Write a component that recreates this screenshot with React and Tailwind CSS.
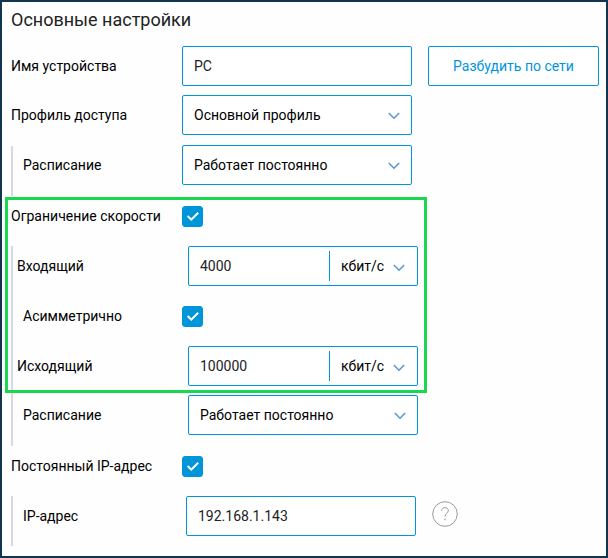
import { useState } from 'react';

function Chevron() {
  return (
    <svg
      className="pointer-events-none absolute right-[12px] top-[16px] h-[10px] w-[12px]"
      viewBox="0 0 12 10"
      fill="none"
      stroke="#5b98cf"
      strokeWidth="1.6"
      aria-hidden="true"
    >
      <path d="M0.8 2 L6 7.2 L11.2 2" />
    </svg>
  );
}

function Row({ label, id, nested, raised, indent = 'pl-0', children }) {
  return (
    <div className={nested ? 'flex h-[50px] border-l-2 border-[#d6d9e4]' : 'flex h-[50px]'}>
      <label
        htmlFor={id}
        className={`shrink-0 ${raised ? 'leading-[38px]' : 'leading-10'} ${nested ? 'w-[169px]' : 'w-[171px]'} ${indent}`}
      >
        {label}
      </label>
      {children}
    </div>
  );
}

function TextField({ id, value, className = '' }) {
  return (
    <input
      id={id}
      type="text"
      defaultValue={value}
      className={`h-10 w-[230px] shrink-0 rounded-xs border border-[#0095d9] bg-white px-[11px] text-[#222] outline-none ${className}`}
    />
  );
}

function SelectField({ id, options, className = '' }) {
  return (
    <div className={`relative -mt-px h-10 w-[230px] shrink-0 ${className}`}>
      <select
        id={id}
        className="h-10 w-full appearance-none rounded-xs border border-[#0095d9] bg-white px-[11px] outline-none"
      >
        {options.map((option) => (
          <option key={option}>{option}</option>
        ))}
      </select>
      <Chevron />
    </div>
  );
}

function SpeedField({ id, value }) {
  return (
    <div className="relative ml-[6px] flex h-10 w-[230px] shrink-0 items-center rounded-xs border border-[#0095d9] bg-white">
      <input
        id={id}
        type="text"
        defaultValue={value}
        className="h-full w-[140px] bg-transparent px-[11px] text-[#222] outline-none"
      />
      <span className="h-[30px] w-px bg-[#0095d9]" />
      <select
        aria-label="Единица скорости"
        className="h-full flex-1 appearance-none bg-transparent pl-[11px] outline-none"
      >
        <option>кбит/с</option>
        <option>Мбит/с</option>
      </select>
      <Chevron />
    </div>
  );
}

function Checkbox({ id }) {
  const [checked, setChecked] = useState(true);
  return (
    <div className="relative mt-[10px] size-[21px] shrink-0">
      <input
        id={id}
        type="checkbox"
        checked={checked}
        onChange={(e) => setChecked(e.target.checked)}
        className="block size-full appearance-none rounded-[3px] border border-[#0095d9] checked:bg-[#0095d9]"
      />
      {checked && (
        <svg
          className="pointer-events-none absolute inset-0 size-full"
          viewBox="0 0 21 21"
          fill="none"
          stroke="#fff"
          strokeWidth="2"
          aria-hidden="true"
        >
          <path d="M5.6 10 L9.3 13.6 L16.2 6.8" />
        </svg>
      )}
    </div>
  );
}

export default function App() {
  return (
    <main className="border-2 border-[#11344f] bg-[#fefefe] pb-[10px] pl-[9px] pr-[7px] font-['Roboto','Noto_Sans',sans-serif] text-sm text-black">
      <h1 className="mb-1 h-10 text-lg leading-9 text-[#222]">Основные настройки</h1>

      <Row label="Имя устройства" id="name">
        <TextField id="name" value="PC" />
        <button
          type="button"
          className="ml-4 h-10 flex-1 rounded-xs border border-[#0095d9] bg-white text-[#0095d9]"
        >
          Разбудить по сети
        </button>
      </Row>
      <Row label="Профиль доступа" id="profile" raised>
        <SelectField id="profile" options={['Основной профиль', 'Без доступа в Интернет']} />
      </Row>
      <Row label="Расписание" id="schedule" nested raised indent="pl-[10px]">
        <SelectField id="schedule" options={['Работает постоянно']} />
      </Row>

      <div className="relative">
        <Row label="Ограничение скорости" id="limit">
          <Checkbox id="limit" />
        </Row>
        <Row label="Входящий" id="incoming" nested indent="pl-1">
          <SpeedField id="incoming" value="4000" />
        </Row>
        <Row label="Асимметрично" id="asymmetric" nested indent="pl-[10px]">
          <Checkbox id="asymmetric" />
        </Row>
        <Row label="Исходящий" id="outgoing" nested indent="pl-1">
          <SpeedField id="outgoing" value="100000" />
        </Row>
        <div className="pointer-events-none absolute -left-[6px] bottom-[3px] top-px w-[422px] border-3 border-[#17d84f]" />
      </div>

      <Row label="Расписание" id="speed-schedule" nested raised indent="pl-[10px]">
        <SelectField id="speed-schedule" className="ml-[6px]" options={['Работает постоянно']} />
      </Row>
      <Row label="Постоянный IP-адрес" id="static-ip">
        <Checkbox id="static-ip" />
      </Row>
      <Row label="IP-адрес" id="ip" nested indent="pl-[10px]">
        <TextField id="ip" value="192.168.1.143" className="ml-1" />
        <button type="button" aria-label="Справка" className="ml-4 mt-[5px] size-[26px] shrink-0">
          <svg viewBox="0 0 26 26" className="size-full" fill="none" stroke="#999" strokeWidth="1">
            <circle cx="13" cy="13" r="12.3" />
            <path d="M9.7 9.8 C9.7 7.8 11 6.6 13 6.6 C15 6.6 16.3 7.8 16.3 9.6 C16.3 11.9 13 12.3 13 15.6" />
            <path d="M13 17.8 V19.3" strokeWidth="1.3" />
          </svg>
        </button>
      </Row>
    </main>
  );
}
